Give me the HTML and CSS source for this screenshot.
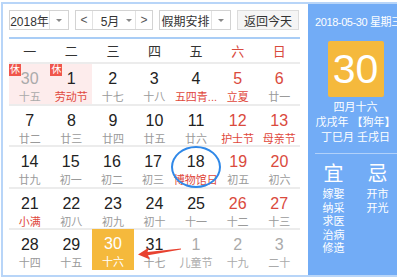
FILE: index.html
```html
<!DOCTYPE html>
<html>
<head>
<meta charset="utf-8">
<link rel="stylesheet" href="styles.css">
</head>
<body>
<div class="cal">
  <div class="main">
    <div class="controls">
      <div class="sel year"><span class="val">2018年</span><span class="dd"><i></i></span></div>
      <div class="sel month"><span class="nav">&lt;</span><span class="val">5月</span><span class="dd"><i></i></span><span class="nav right">&gt;</span></div>
      <div class="sel holi"><span class="val">假期安排</span><span class="dd"><i></i></span></div>
      <div class="btn">返回今天</div>
    </div>
    <div class="bar"></div>
    <div class="week">
      <span>一</span><span>二</span><span>三</span><span>四</span><span>五</span><span class="we">六</span><span class="we">日</span>
    </div>
    <div class="grid">
      <div class="row">
        <div class="cell rest other"><b class="badge">休</b><span class="n">30</span><span class="l">十五</span></div>
        <div class="cell rest"><b class="badge">休</b><span class="n">1</span><span class="l red">劳动节</span></div>
        <div class="cell"><span class="n">2</span><span class="l">十七</span></div>
        <div class="cell"><span class="n">3</span><span class="l">十八</span></div>
        <div class="cell"><span class="n">4</span><span class="l red">五四青...</span></div>
        <div class="cell we"><span class="n">5</span><span class="l red">立夏</span></div>
        <div class="cell we"><span class="n">6</span><span class="l">廿一</span></div>
      </div>
      <div class="row">
        <div class="cell"><span class="n">7</span><span class="l">廿二</span></div>
        <div class="cell"><span class="n">8</span><span class="l">廿三</span></div>
        <div class="cell"><span class="n">9</span><span class="l">廿四</span></div>
        <div class="cell"><span class="n">10</span><span class="l">廿五</span></div>
        <div class="cell"><span class="n">11</span><span class="l">廿六</span></div>
        <div class="cell we"><span class="n">12</span><span class="l red">护士节</span></div>
        <div class="cell we"><span class="n">13</span><span class="l red">母亲节</span></div>
      </div>
      <div class="row">
        <div class="cell"><span class="n">14</span><span class="l">廿九</span></div>
        <div class="cell"><span class="n">15</span><span class="l">初一</span></div>
        <div class="cell"><span class="n">16</span><span class="l">初二</span></div>
        <div class="cell"><span class="n">17</span><span class="l">初三</span></div>
        <div class="cell sel-day"><span class="n">18</span><span class="l red">博物馆日</span></div>
        <div class="cell we"><span class="n">19</span><span class="l">初五</span></div>
        <div class="cell we"><span class="n">20</span><span class="l">初六</span></div>
      </div>
      <div class="row">
        <div class="cell"><span class="n">21</span><span class="l red">小满</span></div>
        <div class="cell"><span class="n">22</span><span class="l">初八</span></div>
        <div class="cell"><span class="n">23</span><span class="l">初九</span></div>
        <div class="cell"><span class="n">24</span><span class="l">初十</span></div>
        <div class="cell"><span class="n">25</span><span class="l">十一</span></div>
        <div class="cell we"><span class="n">26</span><span class="l">十二</span></div>
        <div class="cell we"><span class="n">27</span><span class="l">十三</span></div>
      </div>
      <div class="row">
        <div class="cell"><span class="n">28</span><span class="l">十四</span></div>
        <div class="cell"><span class="n">29</span><span class="l">十五</span></div>
        <div class="cell today"><span class="n">30</span><span class="l">十六</span></div>
        <div class="cell"><span class="n">31</span><span class="l">十七</span></div>
        <div class="cell other"><span class="n">1</span><span class="l">儿童节</span></div>
        <div class="cell other"><span class="n">2</span><span class="l">十九</span></div>
        <div class="cell other"><span class="n">3</span><span class="l">二十</span></div>
      </div>
      <svg class="arrow" width="46" height="16" viewBox="0 0 46 16"><path d="M1 10.5 L12 3.5 L10.5 8 L44 4.5 L44 5.6 L11 11.2 L13 15.5 Z" fill="#e8412f"/></svg>
    </div>
  </div>
  <div class="side">
    <div class="date">2018-05-30 星期三</div>
    <div class="big">30</div>
    <div class="lunar">
      <div>四月十六</div>
      <div>戊戌年 【狗年】</div>
      <div>丁巳月 壬戌日</div>
    </div>
    <div class="sep"></div>
    <div class="yiji">
      <div class="col"><div class="h">宜</div><div>嫁娶</div><div>纳采</div><div>求医</div><div>治病</div><div>修造</div></div>
      <div class="col"><div class="h">忌</div><div>开市</div><div>开光</div></div>
    </div>
  </div>
</div>
</body>
</html>
```
FILE: styles.css
```css
html, body { margin: 0; padding: 0; }
body {
  width: 397px; height: 279px; overflow: hidden; background: #fff;
  font-family: "Liberation Sans", "Noto Sans CJK SC", sans-serif;
  color: #333;
}
.cal {
  margin: 2px 0 0 1px;
  border: 2px solid #b8d5f8;
  width: 410px; height: 271px;
  display: flex;
  box-sizing: content-box;
}
.main {
  width: 305px; flex: none; box-sizing: border-box;
  padding: 6px 8px 0 6px;
}
.controls { display: flex; gap: 6px; height: 20px; font-size: 12px; }
.sel, .btn {
  display: flex; height: 20px; box-sizing: border-box;
  border: 1px solid #d3d3d3; background: #fff; align-items: stretch;
}
.sel span { display: flex; align-items: center; justify-content: center; }
.sel .dd { border-left: 1px solid #e2e2e2; width: 18px; }
.sel .dd i { width: 0; height: 0; border-left: 3px solid transparent; border-right: 3px solid transparent; border-top: 3px solid #888; }
.year { width: 60px; }
.year .val { flex: 1; }
.month { width: 78px; }
.month .nav { width: 16px; color: #555; border-right: 1px solid #e2e2e2; font-size: 12px; }
.month .nav.right { border-right: none; border-left: 1px solid #e2e2e2; }
.month .val { flex: 1; padding-left: 4px; }
.month .dd { border-left: none; width: 12px; }
.holi { width: 72px; }
.holi .val { flex: 1; }
.btn { width: 62px; justify-content: center; align-items: center; background: #f5f5f5; border-color: #dcdcdc; }
.bar { height: 2px; background: #a9cdf6; margin-top: 7px; }
.week {
  display: grid; grid-template-columns: repeat(7, 1fr);
  height: 23px; align-items: center; text-align: center; font-size: 13px; color: #333;
}
.week .we { color: #d9493d; }
.grid { position: relative; }
.row {
  display: grid; grid-template-columns: repeat(7, 1fr);
  border-top: 2px solid #ececec; height: 41.5px; box-sizing: border-box;
}
.cell {
  position: relative; display: flex; flex-direction: column; align-items: center;
  padding-top: 5px; box-sizing: border-box;
}
.cell .n { font-size: 16px; line-height: 20px; color: #222; }
.cell .l { font-size: 11px; line-height: 14px; color: #9a9a9a; margin-top: 1px; white-space: nowrap; }
.cell .l.red { color: #e0483c; }
.cell.we .n { color: #da4a3d; }
.cell.other .n { color: #aaa; }
.cell.other .l { color: #aaa; }
.cell.rest { background: #fdecec; }
.badge {
  position: absolute; left: 0; top: 0; width: 12px; height: 12px;
  background: #f0564c; color: #fff; font-size: 10px; line-height: 12px; text-align: center; font-weight: normal;
}
.sel-day::after {
  content: ""; position: absolute; left: 50%; top: 50%;
  width: 50px; height: 42px; transform: translate(-50%, -50%);
  border: 2px solid #2f88e8; border-radius: 50%; box-sizing: border-box;
}
.cell.today { background: #f5b93c; margin-top: -1px; }
.cell.today .n, .cell.today .l { color: #fff; }
.arrow { position: absolute; left: 128px; top: 182px; }
.side {
  flex: none; width: 103px; background: #72acf6; color: #fff;
  display: flex; flex-direction: column; align-items: center;
}
.date { font-size: 11px; letter-spacing: -0.4px; white-space: nowrap; align-self: flex-start; padding-left: 7px; margin-top: 11px; line-height: 14px; }
.big {
  width: 56px; height: 56px; background: #f5b93c; border-radius: 2px;
  font-size: 41px; line-height: 56px; text-align: center; margin-top: 12px; margin-left: -8px;
}
.lunar { font-size: 11px; line-height: 15px; text-align: center; margin-top: 3px; margin-left: -8px; }
.sep { align-self: stretch; margin: 8px 0 0 7px; height: 1px; background: rgba(255,255,255,0.45); }
.yiji { display: flex; gap: 22px; margin-top: 8px; margin-left: -8px; }
.yiji .col { display: flex; flex-direction: column; align-items: center; font-size: 11px; line-height: 13.5px; }
.yiji .h { font-size: 20px; line-height: 24px; margin-bottom: 2px; }
```
